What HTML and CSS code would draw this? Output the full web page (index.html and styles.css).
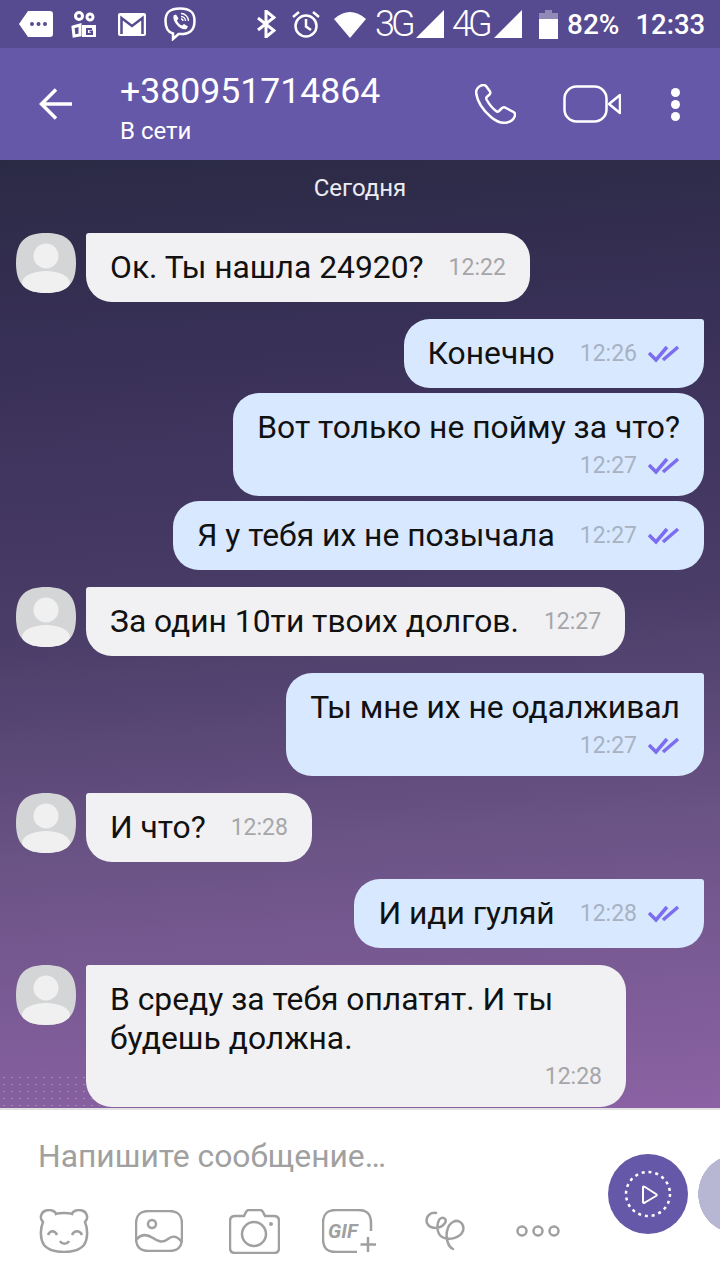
FILE: index.html
```html
<!DOCTYPE html>
<html lang="ru">
<head>
<meta charset="UTF-8" />
<meta name="viewport" content="width=device-width, initial-scale=1" />
<title>Viber chat</title>
<link rel="stylesheet" href="styles.css">
</head>
<body>

<div class="status-bar">
  <svg class="st-tag" viewBox="0 0 34 26"><path fill="#fff" d="M9 0H31Q34 0 34 3V23Q34 26 31 26H9L0 13Z"/><circle cx="13" cy="13" r="2" fill="#564a90"/><circle cx="19.500" cy="13" r="2" fill="#564a90"/><circle cx="26" cy="13" r="2" fill="#564a90"/></svg>
  <svg class="st-cam" viewBox="0 0 25 27"><g fill="none" stroke="#fff" stroke-width="3"><circle cx="8" cy="5" r="3.500"/><circle cx="19" cy="6" r="3"/><path d="M2 16L9 14V24L3 25Z"/></g><path fill="#fff" d="M11 14H25V26H11Z"/><path fill="none" stroke="#564a90" stroke-width="2" d="M21 18H16V23H21V20.500H18.500"/></svg>
  <svg class="st-mail" viewBox="0 0 28 23"><path fill="#fff" d="M2 0H26Q28 0 28 2V21Q28 23 26 23H2Q0 23 0 21V2Q0 0 2 0Z"/><path fill="none" stroke="#564a90" stroke-width="2.500" d="M3.500 21V5L14 13L24.500 5V21"/></svg>
  <svg class="st-viber" viewBox="0 0 32 34"><path fill="none" stroke="#fff" stroke-width="2.500" d="M16 1.500C6 1.500 1.500 5 1.500 14C1.500 21 3.500 25 9 26.500V32L14.500 27C25 27.500 30.500 24 30.500 14C30.500 5 26 1.500 16 1.500Z"/><path fill="#fff" d="M9.500 8.500L12 7.500L14.500 11.500L13 13.500C14 16 15.500 17.500 18 18.500L20 17L24 19.500L22.500 22C17 24 8 15 9.500 8.500Z"/><path fill="none" stroke="#fff" stroke-width="1.300" d="M17 6.500C21 6.500 24.500 10 24.500 14M17 9.500C19.500 9.500 21.500 11.500 21.500 14M17 12C18 12 19 13 19 14"/></svg>
  <svg class="st-bt" viewBox="0 0 19 28"><path fill="none" stroke="#fff" stroke-width="3" d="M1 8L17 20.500L9 27V1L17 7.500L1 20"/></svg>
  <svg class="st-alarm" viewBox="0 0 28 28"><g fill="none" stroke="#fff" stroke-width="2.500"><circle cx="14" cy="16" r="10.500"/><path d="M14 9V16.500L19 20"/><path d="M1 7L7 2M27 7L21 2"/></g></svg>
  <svg class="st-wifi" viewBox="0 0 32 27"><path fill="#fff" d="M0 8Q16 -6 32 8L16 27Z"/></svg>
  <span class="st-net">3G</span>
  <svg class="st-signal" viewBox="0 0 28 28"><path fill="#fff" d="M28 0V28H0Z"/></svg>
  <span class="st-net st-net-4g">4G</span>
  <svg class="st-signal st-signal-4g" viewBox="0 0 28 28"><path fill="#fff" d="M28 0V28H0Z"/></svg>
  <svg class="st-battery" viewBox="0 0 19 29"><path fill="#fff" opacity=".35" d="M6 0H13V3H19V9H0V3H6Z"/><path fill="#fff" d="M0 9H19V29H0Z"/></svg>
  <span class="st-pct">82%</span>
  <span class="st-time">12:33</span>
</div>

<header class="top-bar">
  <svg class="back-icon" viewBox="0 0 34 32"><path fill="none" stroke="#fff" stroke-width="3.500" d="M33 16H3M17 1.500L2.500 16L17 30.500"/></svg>
  <div class="contact">
    <div class="contact-name">+380951714864</div>
    <div class="contact-state">В сети</div>
  </div>
  <svg class="call-icon" viewBox="0 0 41 40"><path fill="none" stroke="#fff" stroke-width="2.500" stroke-linejoin="round" d="M6 1.500C3 3 .8 5.500 1.200 9.500C2.500 18 9 27 16 33C21 37.500 27 39.500 32 38.500C36 37.500 39 35 40 31.500C40.500 30 40 29 38.500 28L30 23.500C28.500 23 27.500 23.500 26.500 24.500L24 27C23 27.800 22 27.800 21 27C17 24 14 20 11.500 15.500C11 14.500 11.200 13.500 12 12.800L14.500 10.500C15.500 9.500 15.500 8.500 15 7.500L11 2C9.500 .5 8 .7 6 1.500Z"/></svg>
  <svg class="video-icon" viewBox="0 0 58 38"><g fill="none" stroke="#fff" stroke-width="2.500" stroke-linejoin="round"><rect x="1.500" y="1.500" width="42" height="35" rx="12"/><path d="M46 19L57 10V28Z"/></g></svg>
  <div class="menu-dots"><span></span><span></span><span></span></div>
</header>

<main class="chat">
  <div class="day">Сегодня</div>

  <div class="msg in">
    <svg class="avatar" viewBox="0 0 60 60"><use href="#avatarShape"/></svg>
    <div class="bubble">Ок. Ты нашла 24920?<span class="meta"><span class="time">12:22</span></span></div>
  </div>

  <div class="msg out first">
    <div class="bubble">Конечно<span class="meta"><span class="time">12:26</span><svg class="ticks" viewBox="0 0 32 18"><use href="#ticks"/></svg></span></div>
  </div>
  <div class="msg out next">
    <div class="bubble stack">Вот только не пойму за что?<span class="meta"><span class="time">12:27</span><svg class="ticks" viewBox="0 0 32 18"><use href="#ticks"/></svg></span></div>
  </div>
  <div class="msg out next">
    <div class="bubble">Я у тебя их не позычала<span class="meta"><span class="time">12:27</span><svg class="ticks" viewBox="0 0 32 18"><use href="#ticks"/></svg></span></div>
  </div>

  <div class="msg in">
    <svg class="avatar" viewBox="0 0 60 60"><use href="#avatarShape"/></svg>
    <div class="bubble">За один 10ти твоих долгов.<span class="meta"><span class="time">12:27</span></span></div>
  </div>

  <div class="msg out first">
    <div class="bubble stack">Ты мне их не одалживал<span class="meta"><span class="time">12:27</span><svg class="ticks" viewBox="0 0 32 18"><use href="#ticks"/></svg></span></div>
  </div>

  <div class="msg in">
    <svg class="avatar" viewBox="0 0 60 60"><use href="#avatarShape"/></svg>
    <div class="bubble">И что?<span class="meta"><span class="time">12:28</span></span></div>
  </div>

  <div class="msg out first">
    <div class="bubble">И иди гуляй<span class="meta"><span class="time">12:28</span><svg class="ticks" viewBox="0 0 32 18"><use href="#ticks"/></svg></span></div>
  </div>

  <div class="msg in">
    <svg class="avatar" viewBox="0 0 60 60"><use href="#avatarShape"/></svg>
    <div class="bubble stack wide">В среду за тебя оплатят. И ты будешь должна.<span class="meta"><span class="time">12:28</span></span></div>
  </div>
</main>

<footer class="compose">
  <div class="compose-main">
    <div class="placeholder">Напишите сообщение…</div>
    <div class="tools">
      <svg class="tool-bear" viewBox="0 0 50 44"><g class="tool-line"><path d="M17 5C20 3.500 30 3.500 33 5C34 1.500 39 .5 43 1.500C48 3 50 9 46 13C49 20 49 30 45 36C41 41 33 43 25 43C17 43 9 41 5 36C1 30 1 20 4 13C0 9 2 3 7 1.500C11 .5 16 1.500 17 5Z"/><path d="M9 26C11 21 16 21 18 26M33 26C35 21 41 21 43 26M21 32C23 35.500 28 35.500 30 32"/></g></svg>
      <svg class="tool-photo" viewBox="0 0 48 42"><g class="tool-line"><path d="M14 1H34C43 1 47 5 47 14V28C47 37 43 41 34 41H14C5 41 1 37 1 28V14C1 5 5 1 14 1Z"/><circle cx="17" cy="14" r="4"/><path d="M1 30C6 24 12 24 18 28C24 32 28 33 33 29C38 25 42 26 47 32"/></g></svg>
      <svg class="tool-camera" viewBox="0 0 51 45"><g class="tool-line"><path d="M6 7H15L17 3Q18 1 20 1H31Q33 1 34 3L36 7H45Q50 7 50 12V39Q50 44 45 44H6Q1 44 1 39V12Q1 7 6 7Z"/><circle cx="25" cy="25" r="12"/></g><circle cx="42" cy="15" r="2" fill="#a0a0a0"/></svg>
      <svg class="tool-gif" viewBox="0 0 56 44"><g class="tool-line"><path d="M49 22V14C49 5 45 1 36 1H14C5 1 1 5 1 14V30C1 39 5 43 14 43H35"/><path d="M46 28V43M38.500 35.500H54"/></g><text x="6" y="29" class="gif-label">GIF</text></svg>
      <svg class="tool-doodle" viewBox="0 0 46 40"><g class="tool-line"><path stroke-linecap="round" d="M12 2C6 1 1 6 3 12C6 19 17 18 21 12C24 7 17 5 15 9C13 13 12 22 18 26C25 30 36 27 39 20C41 12 34 8 29 11C23 14 21 24 24 32C25 35 27 37 29 38"/></g></svg>
      <svg class="tool-more" viewBox="0 0 44 12"><g class="tool-line"><circle cx="6" cy="6" r="4.500"/><circle cx="22" cy="6" r="4.500"/><circle cx="38" cy="6" r="4.500"/></g></svg>
    </div>
  </div>
  <div class="round-btn primary">
    <svg viewBox="0 0 80 80"><circle cx="40" cy="40" r="22" fill="none" stroke="#fff" stroke-width="2.500" stroke-dasharray="3 3.900"/><path fill="none" stroke="#fff" stroke-width="2" stroke-linejoin="round" d="M35 33V48Q35 49.500 37 48.500L48 42Q49.500 41 48 40L37 33Q35 32 35 33Z"/></svg>
  </div>
  <div class="round-btn muted"></div>
</footer>

<svg class="defs" width="0" height="0">
  <defs>
    <g id="ticks" fill="none" stroke="#7b6cf0" stroke-width="3.500">
      <path d="M1 8L8 15L19 2"/>
      <path d="M15 15L30 2"/>
    </g>
    <clipPath id="squircle"><path d="M30 0C50 0 60 8 60 30C60 52 50 60 30 60C10 60 0 52 0 30C0 8 10 0 30 0Z"/></clipPath>
    <g id="avatarShape" clip-path="url(#squircle)">
      <rect width="60" height="60" fill="#d4d5d6"/>
      <circle cx="30" cy="23" r="12.500" fill="#f0f0f0"/>
      <ellipse cx="30" cy="50" rx="24" ry="12" fill="#f0f0f0"/>
    </g>
  </defs>
</svg>

</body>
</html>
```
FILE: styles.css
```css
body {
  margin: 0;
  width: 720px;
  height: 1280px;
  overflow: hidden;
  font-family: Roboto, "Noto Sans", sans-serif;
  background: #fff;
  color: #111;
}
svg {
  display: block;
  flex-shrink: 0;
}
.defs {
  position: absolute;
}

/* status bar */
.status-bar {
  height: 48px;
  background: #564a90;
  display: flex;
  align-items: center;
  padding-left: 19px;
  color: #fff;
}
.st-tag { width: 34px; height: 26px; }
.st-cam { width: 25px; height: 27px; margin-left: 18px; }
.st-mail { width: 28px; height: 23px; margin-left: 22px; }
.st-viber { width: 32px; height: 34px; margin-left: 18px; }
.st-bt { width: 19px; height: 28px; margin-left: 61px; }
.st-alarm { width: 28px; height: 28px; margin-left: 16px; }
.st-wifi { width: 32px; height: 27px; margin-left: 14px; }
.st-net {
  width: 37px;
  margin-left: 9px;
  font-size: 36px;
  font-weight: 300;
  letter-spacing: -4px;
  line-height: 48px;
}
.st-net-4g { margin-left: 8px; }
.st-signal { width: 28px; height: 28px; margin-left: 4px; }
.st-signal-4g { margin-left: 5px; }
.st-battery { width: 19px; height: 29px; margin-left: 17px; }
.st-pct {
  margin-left: 9px;
  font-size: 28px;
  font-weight: 500;
}
.st-time {
  margin-left: 16px;
  font-size: 27.5px;
  font-weight: 500;
}

/* header */
.top-bar {
  height: 112px;
  background: #6558a8;
  display: flex;
  align-items: center;
  color: #fff;
}
.back-icon { width: 34px; height: 32px; margin-left: 39px; }
.contact {
  width: 355px;
  margin-left: 47px;
  padding-top: 7px;
}
.contact-name {
  font-size: 35.6px;
  line-height: 44px;
}
.contact-state {
  font-size: 24px;
  line-height: 32px;
  margin-top: 2px;
}
.call-icon { width: 41px; height: 40px; }
.video-icon { width: 58px; height: 38px; margin-left: 47px; }
.menu-dots {
  margin-left: 50px;
  display: flex;
  flex-direction: column;
  gap: 3px;
}
.menu-dots span {
  width: 9px;
  height: 9px;
  border-radius: 50%;
  background: #fff;
}

/* chat */
.chat {
  position: relative;
  height: 948px;
  overflow: hidden;
  background: linear-gradient(176deg, #2b2a45 0%, #3a3159 22%, #4a3d68 48%, #6c5487 72%, #8b62a4 100%);
}
.chat::after {
  content: "";
  position: absolute;
  left: 0;
  bottom: 0;
  width: 100px;
  height: 34px;
  background-image: radial-gradient(circle, rgba(255,255,255,0.25) 0.7px, transparent 1px);
  background-size: 8px 7px;
}
.day {
  color: #ececf2;
  font-size: 24px;
  line-height: 28px;
  text-align: center;
  padding-top: 14px;
  margin-bottom: 31px;
}
.msg {
  display: flex;
  font-size: 31.8px;
  line-height: 39px;
  margin-top: 17px;
  padding: 0 16px;
}
.msg.next {
  margin-top: 5px;
}
.msg.in {
  gap: 10px;
}
.msg.out {
  justify-content: flex-end;
}
.avatar {
  width: 60px;
  height: 60px;
}
.bubble {
  display: flex;
  align-items: center;
  padding: 15px 24px;
  border-radius: 26px;
  box-sizing: border-box;
}
.in .bubble {
  background: #f1f1f3;
  border-top-left-radius: 3px;
}
.out .bubble {
  background: #d8e8ff;
}
.out.first .bubble {
  border-top-right-radius: 3px;
}
.meta {
  display: flex;
  align-items: center;
  gap: 11px;
  margin-left: 25px;
  line-height: 39px;
}
.time {
  font-size: 23px;
  color: #a6a6a9;
}
.out .time {
  color: #a7b2c2;
}
.ticks {
  width: 32px;
  height: 18px;
}
.bubble.stack {
  display: block;
  padding-bottom: 11px;
}
.stack .meta {
  justify-content: flex-end;
  line-height: 38px;
  height: 38px;
}
.bubble.wide {
  width: 540px;
}

/* compose bar */
.compose {
  height: 170px;
  border-top: 2px solid #e2e2e4;
  background: #fff;
  display: flex;
}
.compose-main {
  width: 608px;
  flex-shrink: 0;
  box-sizing: border-box;
  padding-left: 38px;
}
.placeholder {
  margin-top: 27px;
  font-size: 31.8px;
  line-height: 38px;
  color: #a0a0a0;
}
.tools {
  display: flex;
  align-items: center;
  gap: 46px;
  height: 44px;
  margin-top: 34px;
  margin-left: 1px;
}
.tool-line {
  fill: none;
  stroke: #a0a0a0;
  stroke-width: 2.5;
}
.gif-label {
  fill: #a0a0a0;
  font-size: 20px;
  font-weight: 700;
  font-style: italic;
}
.tool-bear { width: 50px; height: 44px; }
.tool-photo { width: 48px; height: 42px; }
.tool-camera { width: 51px; height: 45px; }
.tool-gif { width: 56px; height: 44px; margin-left: -4px; }
.tool-doodle { width: 46px; height: 40px; }
.tool-more { width: 44px; height: 12px; }
.round-btn {
  width: 80px;
  height: 80px;
  flex-shrink: 0;
  border-radius: 50%;
  margin-top: 44px;
}
.round-btn.primary {
  background: #6558a8;
}
/* cut off by the window edge in the app, so only the visible part is a box */
.round-btn.muted {
  width: 22px;
  border-radius: 0;
  margin-left: 10px;
  background: radial-gradient(circle 40px at 40px 40px, #b7b7d4 99%, transparent 100%);
}
```
